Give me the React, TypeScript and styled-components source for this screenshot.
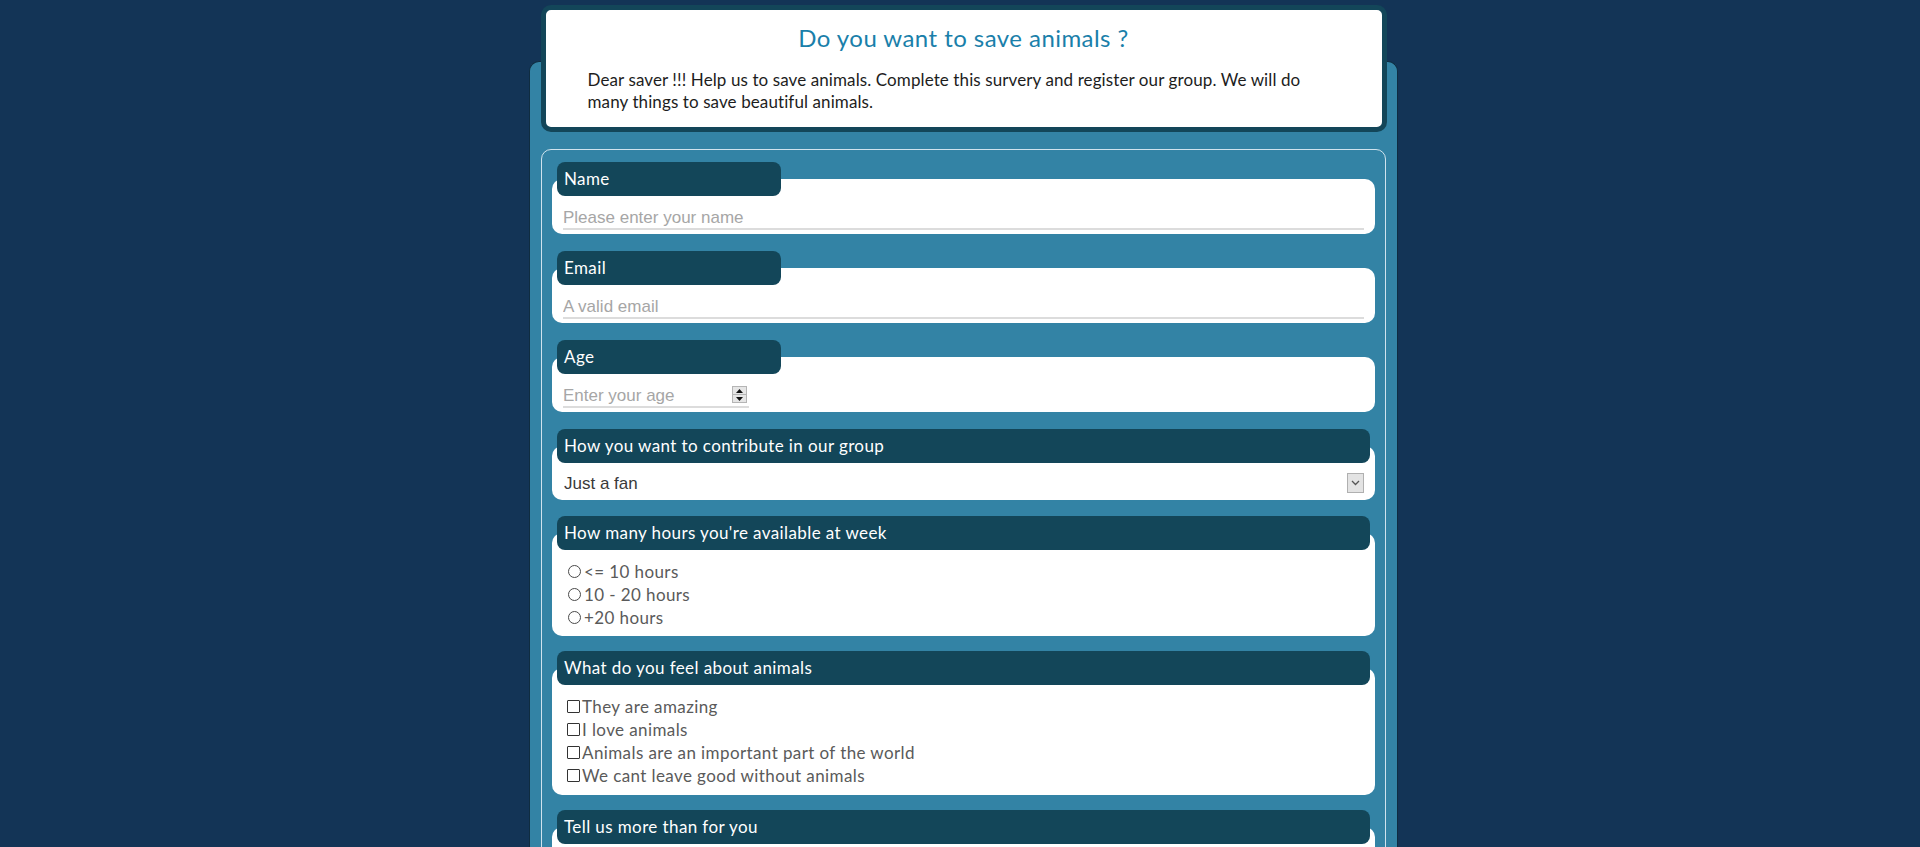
import React from "react";
import styled, { createGlobalStyle } from "styled-components";

const GlobalStyle = createGlobalStyle`
  html, body {
    margin: 0;
    padding: 0;
    background: #133456;
  }
  body {
    font-family: Lato, "Noto Sans", sans-serif;
  }
  * { box-sizing: border-box; }
`;

const Page = styled.div`
  width: 869px;
  margin-left: calc(50% - 431px);
  padding-top: 5px;
  display: flex;
  flex-direction: column;
  align-items: center;
`;

const Header = styled.header`
  position: relative;
  z-index: 1;
  width: 846px;
  margin-bottom: -71px;
  background: #ffffff;
  border: 5px solid #134659;
  border-radius: 10px;
  padding: 14px 42px 14px 42px;
`;

const Title = styled.h1`
  margin: 0;
  text-align: center;
  font-family: Lato, sans-serif;
  font-weight: 400;
  font-size: 24px;
  letter-spacing: 0.45px;
  line-height: 28px;
  color: #1a7faa;
`;

const Intro = styled.p`
  margin: 17px 0 0 0;
  font-size: 17px;
  letter-spacing: 0.1px;
  line-height: 22px;
  color: #1d1d1d;
`;

const Container = styled.main`
  width: 869px;
  background: #3383a5;
  border: 1px solid #0f2c40;
  border-bottom: none;
  border-radius: 10px 10px 0 0;
  padding: 87px 11px 40px 11px;
`;

const Fieldset = styled.form`
  border: 1px solid rgba(235, 245, 250, 0.85);
  border-radius: 10px;
  padding: 12px 10px 20px 10px;
  display: flex;
  flex-direction: column;
`;

const Field = styled.div<{ $gap?: number }>`
  display: flex;
  flex-direction: column;
  margin-bottom: ${(p) => p.$gap ?? 17}px;
`;

const Label = styled.label<{ $wide?: boolean }>`
  position: relative;
  z-index: 1;
  height: 34px;
  ${(p) => (p.$wide ? "margin: 0 5px;" : "margin-left: 5px; width: 224px;")}
  background: #134659;
  border-radius: 8px;
  color: #ffffff;
  font-size: 17px;
  letter-spacing: 0.4px;
  line-height: 34px;
  padding: 0 7px;
  white-space: nowrap;
`;

const Box = styled.div<{ $pt?: number; $pb?: number }>`
  margin-top: -17px;
  background: #ffffff;
  border-radius: 10px;
  padding: ${(p) => 17 + (p.$pt ?? 11)}px 11px ${(p) => p.$pb ?? 4}px 11px;
`;

const TextInput = styled.input`
  display: block;
  width: 100%;
  height: 23px;
  border: none;
  border-bottom: 2px solid #dcdcdc;
  outline: none;
  padding: 0;
  font-family: "Liberation Sans", Arial, sans-serif;
  font-size: 17px;
  color: #444;
  background: transparent;
  &::placeholder {
    color: #a6a6a6;
  }
`;

const NumberWrap = styled.div`
  display: flex;
  align-items: center;
  width: 186px;
  height: 23px;
  border-bottom: 2px solid #dcdcdc;
`;

const NumberInput = styled.input`
  flex: 1;
  min-width: 0;
  border: none;
  outline: none;
  padding: 0;
  font-family: "Liberation Sans", Arial, sans-serif;
  font-size: 17px;
  color: #444;
  background: transparent;
  -moz-appearance: textfield;
  &::placeholder {
    color: #a6a6a6;
  }
  &::-webkit-inner-spin-button,
  &::-webkit-outer-spin-button {
    -webkit-appearance: none;
    margin: 0;
  }
`;

const Spinner = styled.span`
  display: flex;
  flex-direction: column;
  width: 15px;
  height: 17px;
  margin-right: 2px;
  margin-bottom: 2px;
  border: 1px solid #b5b5b5;
  background: #e6e6e6;
`;

const SpinHalf = styled.span`
  flex: 1;
  display: flex;
  align-items: center;
  justify-content: center;
  & + & {
    border-top: 1px solid #b5b5b5;
  }
`;

const SelectWrap = styled.div`
  position: relative;
  height: 30px;
`;

const Select = styled.select`
  width: 100%;
  height: 30px;
  border: none;
  outline: none;
  appearance: none;
  -webkit-appearance: none;
  background: transparent;
  padding: 0 0 0 1px;
  font-family: "Liberation Sans", Arial, sans-serif;
  font-size: 17px;
  color: #3a3a3a;
`;

const SelectArrow = styled.span`
  position: absolute;
  right: 0;
  top: 5px;
  width: 17px;
  height: 20px;
  border: 1px solid #b0b0b0;
  background: #e3e3e3;
  display: flex;
  align-items: center;
  justify-content: center;
  pointer-events: none;
`;

const OptionRow = styled.label`
  display: flex;
  align-items: center;
  height: 23px;
  font-size: 17px;
  letter-spacing: 0.4px;
  color: #5a5a5a;
`;

const Radio = styled.input`
  appearance: none;
  -webkit-appearance: none;
  flex: none;
  width: 13px;
  height: 13px;
  margin: 0 3px 0 5px;
  border: 1px solid #4a4a4a;
  border-radius: 50%;
  background: #fff;
`;

const Check = styled.input`
  appearance: none;
  -webkit-appearance: none;
  flex: none;
  width: 13px;
  height: 13px;
  margin: 0 2px 0 4px;
  border: 1px solid #333;
  border-radius: 1px;
  background: #fff;
`;

const TextArea = styled.textarea`
  display: block;
  width: 100%;
  height: 100px;
  border: none;
  border-bottom: 2px solid #dcdcdc;
  outline: none;
  resize: none;
  font-family: "Liberation Sans", Arial, sans-serif;
  font-size: 17px;
  &::placeholder {
    color: #a6a6a6;
  }
`;

const Submit = styled.button`
  align-self: center;
  margin-top: 4px;
  padding: 8px 40px;
  border: none;
  border-radius: 8px;
  background: #134659;
  color: #fff;
  font-family: Lato, sans-serif;
  font-size: 16px;
`;

const hours = ["<= 10 hours", "10 - 20 hours", "+20 hours"];
const feelings = [
  "They are amazing",
  "I love animals",
  "Animals are an important part of the world",
  "We cant leave good without animals",
];

export default function App() {
  return (
    <>
      <GlobalStyle />
      <Page>
        <Header>
          <Title>Do you want to save animals ?</Title>
          <Intro>
            Dear saver !!! Help us to save animals. Complete this survery and register our group. We will do
            many things to save beautiful animals.
          </Intro>
        </Header>
        <Container>
          <Fieldset onSubmit={(e) => e.preventDefault()}>
            <Field>
              <Label htmlFor="name">Name</Label>
              <Box>
                <TextInput id="name" type="text" placeholder="Please enter your name" />
              </Box>
            </Field>
            <Field>
              <Label htmlFor="email">Email</Label>
              <Box>
                <TextInput id="email" type="email" placeholder="A valid email" />
              </Box>
            </Field>
            <Field>
              <Label htmlFor="age">Age</Label>
              <Box>
                <NumberWrap>
                  <NumberInput id="age" type="number" placeholder="Enter your age" />
                  <Spinner>
                    <SpinHalf>
                      <svg width="7" height="4" viewBox="0 0 7 4"><path d="M0 4 L3.5 0 L7 4 Z" fill="#111" /></svg>
                    </SpinHalf>
                    <SpinHalf>
                      <svg width="7" height="4" viewBox="0 0 7 4"><path d="M0 0 L3.5 4 L7 0 Z" fill="#111" /></svg>
                    </SpinHalf>
                  </Spinner>
                </NumberWrap>
              </Box>
            </Field>
            <Field $gap={16}>
              <Label $wide htmlFor="role">How you want to contribute in our group</Label>
              <Box $pt={5} $pb={2}>
                <SelectWrap>
                  <Select id="role" defaultValue="fan">
                    <option value="fan">Just a fan</option>
                    <option value="volunteer">Volunteer</option>
                    <option value="donor">Donor</option>
                  </Select>
                  <SelectArrow>
                    <svg width="9" height="6" viewBox="0 0 9 6">
                      <path d="M1 1 L4.5 4.5 L8 1" fill="none" stroke="#555" strokeWidth="1.3" />
                    </svg>
                  </SelectArrow>
                </SelectWrap>
              </Box>
            </Field>
            <Field $gap={15}>
              <Label $wide>How many hours you're available at week</Label>
              <Box $pt={10} $pb={7}>
                {hours.map((h) => (
                  <OptionRow key={h}>
                    <Radio type="radio" name="hours" value={h} />
                    {h}
                  </OptionRow>
                ))}
              </Box>
            </Field>
            <Field $gap={15}>
              <Label $wide>What do you feel about animals</Label>
              <Box $pt={10} $pb={8}>
                {feelings.map((f) => (
                  <OptionRow key={f}>
                    <Check type="checkbox" value={f} />
                    {f}
                  </OptionRow>
                ))}
              </Box>
            </Field>
            <Field>
              <Label $wide htmlFor="more">Tell us more than for you</Label>
              <Box>
                <TextArea id="more" placeholder="Write here..." />
              </Box>
            </Field>
            <Submit type="submit">Submit</Submit>
          </Fieldset>
        </Container>
      </Page>
    </>
  );
}
